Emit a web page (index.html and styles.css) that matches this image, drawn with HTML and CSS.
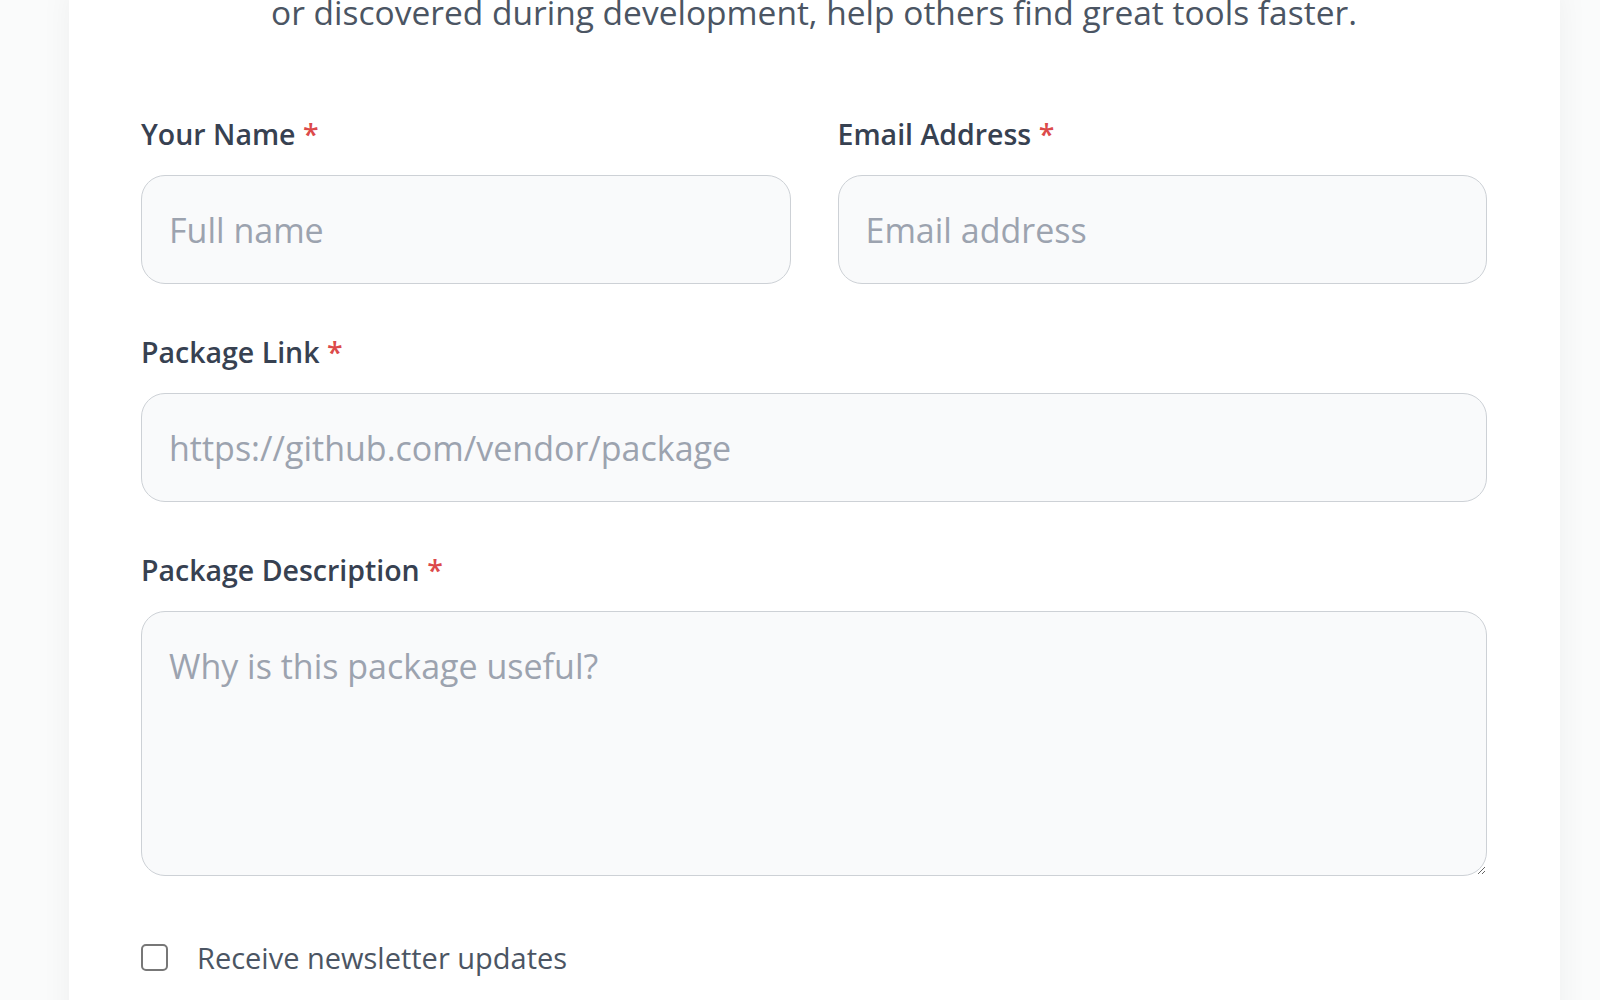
FILE: index.html
```html
<!DOCTYPE html>
<html lang="en">
<head>
    <meta charset="UTF-8">
    <meta name="viewport" content="width=device-width, initial-scale=1.0">
    <title>Submit a Package</title>
    <link rel="stylesheet" href="styles.css">
</head>
<body>
    <div class="page">
        <div class="card">
            <p class="intro">or discovered during development, help others find great tools faster.</p>

            <form class="submit-form">
                <div class="row">
                    <div class="form-group">
                        <label for="name">Your Name <span class="req">*</span></label>
                        <input type="text" id="name" placeholder="Full name">
                    </div>
                    <div class="form-group">
                        <label for="email">Email Address <span class="req">*</span></label>
                        <input type="email" id="email" placeholder="Email address">
                    </div>
                </div>
                <div class="form-group">
                    <label for="link">Package Link <span class="req">*</span></label>
                    <input type="url" id="link" placeholder="https://github.com/vendor/package">
                </div>
                <div class="form-group">
                    <label for="description">Package Description <span class="req">*</span></label>
                    <textarea id="description" placeholder="Why is this package useful?"></textarea>
                </div>
                <div class="check">
                    <input type="checkbox" id="newsletter">
                    <label for="newsletter">Receive newsletter updates</label>
                </div>
            </form>
        </div>
    </div>
</body>
</html>
```

FILE: styles.css
```css
body {
    margin: 0;
    background-color: #fafbfb;
    font-family: "Open Sans", "Noto Sans", Arial, sans-serif;
    color: #333;
    overflow: hidden;
}
.page {
    padding-left: 69px;
    width: 1491px;
}
.card {
    background-color: #fff;
    padding: 0 73px 120px 72px;
    box-shadow: 0 0 30px rgba(0, 0, 0, 0.05);
    margin-top: -11px;
}
.intro {
    margin: 0 0 80px;
    text-align: center;
    font-size: 33.5px;
    line-height: 47px;
    color: #4b5563;
}
.row {
    display: flex;
    gap: 47px;
}
.row .form-group {
    flex: 1;
}
.form-group {
    margin-bottom: 50px;
}
.form-group label {
    display: block;
    font-size: 28.5px;
    line-height: 36px;
    font-weight: 600;
    color: #374151;
    margin-bottom: 23px;
}
.req {
    color: #dc4a4a;
}
input[type="text"],
input[type="email"],
input[type="url"],
textarea {
    display: block;
    width: 100%;
    box-sizing: border-box;
    height: 109px;
    padding: 0 27px;
    font-family: inherit;
    font-size: 34px;
    color: #333;
    background-color: #f9fafb;
    border: 1px solid #cdd1d6;
    border-radius: 24px;
}
textarea {
    height: 265px;
    padding: 31px 27px 27px;
    line-height: 46px;
    resize: vertical;
}
::placeholder {
    color: #9ca3af;
}
.check {
    display: flex;
    align-items: center;
    gap: 29px;
    margin-top: 62px;
}
.check input {
    appearance: none;
    margin: 0;
    width: 27px;
    height: 27px;
    border: 2px solid #777;
    border-radius: 5px;
    background-color: #fff;
}
.check label {
    font-size: 29px;
    color: #4b5563;
}
```
